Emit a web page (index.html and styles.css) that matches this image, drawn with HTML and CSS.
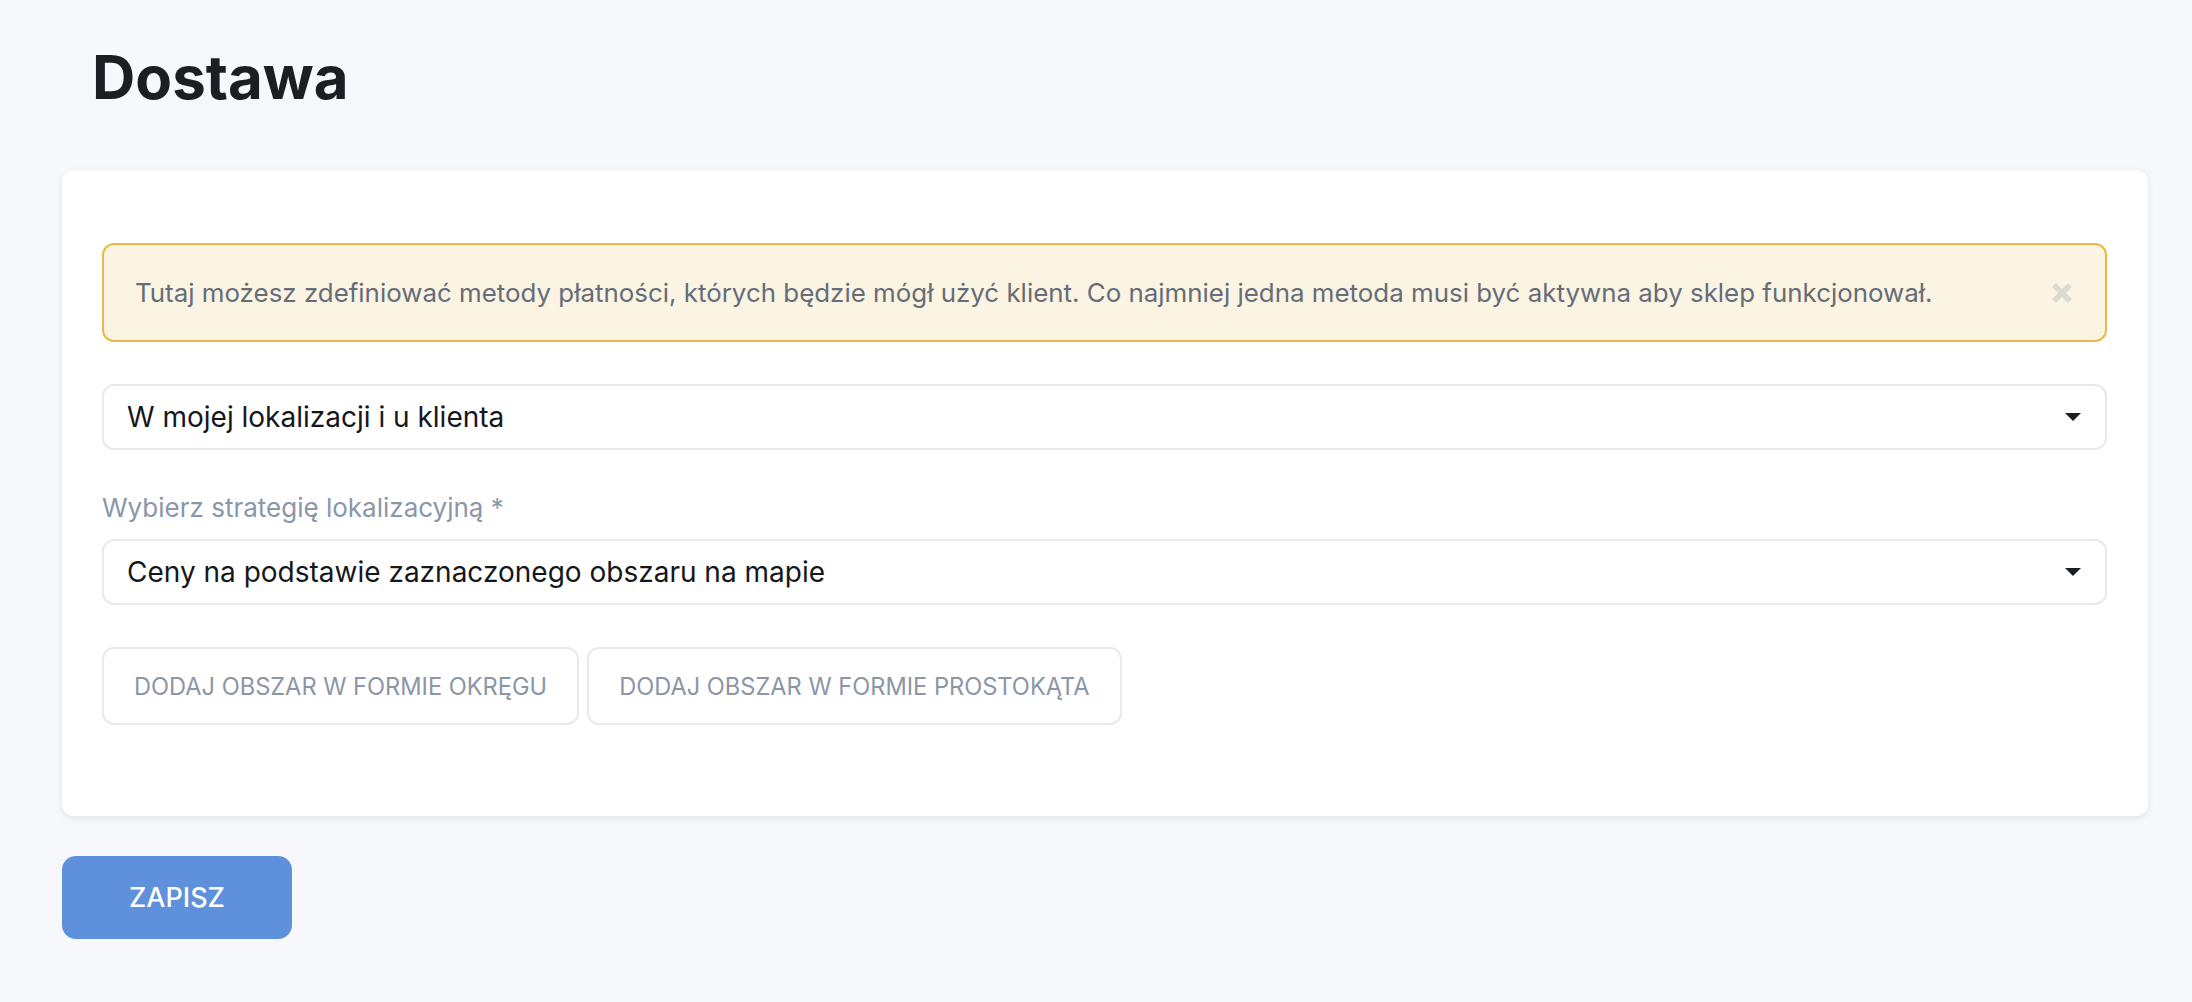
FILE: index.html
```html
<!DOCTYPE html>
<html lang="pl">
<head>
  <meta charset="UTF-8" />
  <meta name="viewport" content="width=device-width, initial-scale=1.0"/>
  <title>Dostawa</title>
  <link rel="stylesheet" href="styles.css">
</head>
<body>
  <div class="page">
    <h1 class="page-title">Dostawa</h1>

    <div class="card">
      <div class="alert">
        <span class="alert-text">Tutaj możesz zdefiniować metody płatności, których będzie mógł użyć klient. Co najmniej jedna metoda musi być aktywna aby sklep funkcjonował.</span>
        <span class="alert-close">
          <svg width="22" height="22" viewBox="0 0 22 22">
            <path d="M3 3 L19 19 M19 3 L3 19" stroke="#dcdad2" stroke-width="5.5"/>
          </svg>
        </span>
      </div>

      <div class="select first">
        <span>W mojej lokalizacji i u klienta</span>
        <span class="caret"></span>
      </div>

      <label class="field-label">Wybierz strategię lokalizacyjną *</label>
      <div class="select">
        <span>Ceny na podstawie zaznaczonego obszaru na mapie</span>
        <span class="caret"></span>
      </div>

      <div class="area-buttons">
        <button class="area-btn">Dodaj obszar w formie okręgu</button>
        <button class="area-btn">Dodaj obszar w formie prostokąta</button>
      </div>
    </div>

    <button class="save-btn">Zapisz</button>
  </div>
</body>
</html>
```

FILE: styles.css
```css
body {
  margin: 0;
  background: #f7f8fc;
  font-family: Inter, "Noto Sans", sans-serif;
  color: #1b1e23;
}
.page {
  padding: 41px 44px 40px 62px;
}
.page-title {
  margin: 0 0 57px 30px;
  font-size: 60px;
  line-height: 72px;
  font-weight: 700;
  color: #1b1e23;
}
.card {
  background: #fff;
  border-radius: 12px;
  box-shadow: 0 2px 6px rgba(30, 40, 60, 0.1);
  padding: 73px 41px 91px 40px;
}
.alert {
  display: flex;
  align-items: center;
  justify-content: space-between;
  height: 99px;
  box-sizing: border-box;
  padding: 0 32px 0 31px;
  background: #fcf4e3;
  border: 2px solid #e8b94a;
  border-radius: 12px;
  color: #646d78;
  font-size: 25.9px;
}
.alert-close {
  display: flex;
}
.select {
  display: flex;
  align-items: center;
  justify-content: space-between;
  height: 66px;
  box-sizing: border-box;
  padding: 0 24px 0 23px;
  border: 2px solid #e7e9ed;
  border-radius: 12px;
  font-size: 28px;
  color: #15171b;
}
.select.first {
  margin-top: 42px;
}
.caret {
  width: 0;
  height: 0;
  border-left: 8px solid transparent;
  border-right: 8px solid transparent;
  border-top: 8px solid #1b1e23;
}
.field-label {
  display: block;
  margin: 42px 0 15px;
  font-size: 26px;
  line-height: 32px;
  color: #8a97a8;
}
.area-buttons {
  display: flex;
  gap: 8px;
  margin-top: 42px;
}
.area-btn {
  height: 78px;
  padding: 0 30px;
  background: #fff;
  border: 2px solid #e7e9ed;
  border-radius: 12px;
  font-family: inherit;
  font-size: 23.6px;
  text-transform: uppercase;
  color: #8c96a6;
  cursor: pointer;
}
.save-btn {
  margin-top: 40px;
  width: 230px;
  height: 83px;
  background: #5e90dc;
  border: none;
  border-radius: 14px;
  font-family: inherit;
  font-size: 27px;
  font-weight: 500;
  text-transform: uppercase;
  color: #fff;
  cursor: pointer;
}
```
